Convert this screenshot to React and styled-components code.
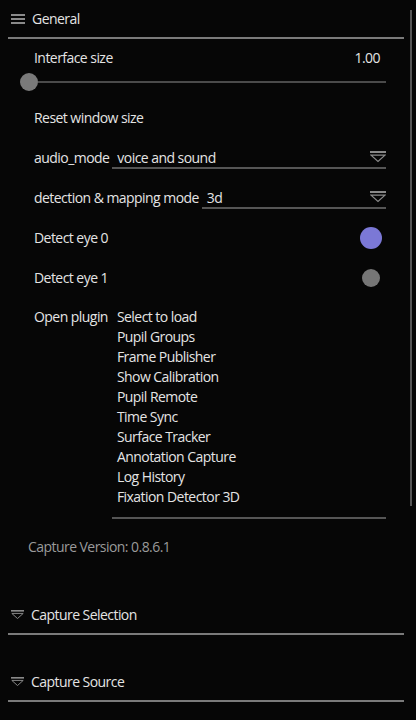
import React from 'react';
import styled, { createGlobalStyle } from 'styled-components';

const GlobalStyle = createGlobalStyle`
  html, body {
    margin: 0;
    padding: 0;
    background: #060606;
  }
  body {
    font-family: "Open Sans", "Noto Sans", sans-serif;
    font-size: 14px;
    letter-spacing: -0.55px;
    color: #e4e4e4;
  }
`;

const Screen = styled.div`
  width: 416px;
  height: 720px;
  background: #060606;
  display: flex;
  align-items: flex-start;
  overflow: hidden;
`;

const Panel = styled.div`
  flex: 1;
  display: flex;
  flex-direction: column;
  padding-left: 8px;
  margin-right: 6px;
`;

const ScrollTrack = styled.div`
  width: 2px;
  height: 496px;
  margin-top: 10px;
  margin-right: 4px;
  background: #555;
`;

const SectionHeader = styled.div`
  flex: none;
  height: 37px;
  display: flex;
  align-items: center;
  gap: 7px;
  padding-left: 3px;
  border-bottom: 2px solid #7a7a7a;
  margin-top: ${p => p.$top || 0}px;
`;

const Text = styled.span`
  line-height: 20px;
  padding-top: 1px;
  color: ${p => p.$color || '#e4e4e4'};
`;

const Body = styled.div`
  flex: none;
  display: flex;
  flex-direction: column;
  padding: 8px 18px 0 26px;
`;

const Row = styled.div`
  flex: none;
  height: ${p => p.$h || 40}px;
  display: flex;
  align-items: center;
  justify-content: space-between;
`;

const SliderRow = styled.div`
  flex: none;
  height: 20px;
  margin: 5px 0 5px -14px;
  display: flex;
  align-items: center;
`;

const Knob = styled.div`
  width: 18px;
  height: 18px;
  border-radius: 50%;
  background: #7a7a7a;
  flex: none;
`;

const SliderTrack = styled.div`
  flex: 1;
  height: 2px;
  background: #4a4a4a;
`;

const SelectRow = styled.div`
  flex: none;
  height: 40px;
  display: flex;
  align-items: center;
  gap: 3px;
`;

const SelectBox = styled.div`
  flex: 1;
  height: 20px;
  margin-top: 2px;
  display: flex;
  align-items: center;
  justify-content: space-between;
  padding-left: 5px;
  border-bottom: 2px solid #555;
`;

const Toggle = styled.div`
  width: ${p => (p.$on ? 22 : 18)}px;
  height: ${p => (p.$on ? 22 : 18)}px;
  border-radius: 50%;
  background: ${p => (p.$on ? '#7b78d6' : '#767676')};
  margin-right: ${p => (p.$on ? 4 : 6)}px;
  margin-top: 2px;
`;

const PluginRow = styled.div`
  flex: none;
  display: flex;
  gap: 9px;
  padding-top: 10px;
  line-height: 20px;
`;

const PluginList = styled.div`
  flex: 1;
  display: flex;
  flex-direction: column;
  padding: 0 0 10px 5px;
  margin-left: -5px;
  border-bottom: 2px solid #555;
`;

const Version = styled.div`
  flex: none;
  margin: 18px 0 0 -6px;
  line-height: 20px;
  color: #9a9a9a;
`;

const Hamburger = () => (
  <svg width="14" height="10" viewBox="0 0 14 10" style={{ flex: 'none' }}>
    <rect x="0" y="0" width="14" height="2" fill="#8a8a8a" />
    <rect x="0" y="4" width="14" height="2" fill="#8a8a8a" />
    <rect x="0" y="8" width="14" height="2" fill="#8a8a8a" />
  </svg>
);

const DropIcon = ({ w = 16, color = '#8a8a8a' }) => (
  <svg width={w} height={w * 0.72} viewBox="0 0 16 11.5" style={{ flex: 'none' }}>
    <rect x="0" y="0" width="16" height="2" fill={color} />
    <path d="M1 4.2 H15 L8 10.5 Z" fill="none" stroke={color} strokeWidth="1.2" strokeLinejoin="miter" />
  </svg>
);

const plugins = [
  'Select to load',
  'Pupil Groups',
  'Frame Publisher',
  'Show Calibration',
  'Pupil Remote',
  'Time Sync',
  'Surface Tracker',
  'Annotation Capture',
  'Log History',
  'Fixation Detector 3D',
];

export default function App() {
  return (
    <>
      <GlobalStyle />
      <Screen>
        <Panel>
          <SectionHeader>
            <Hamburger />
            <Text>General</Text>
          </SectionHeader>
          <Body>
            <Row $h={20}>
              <Text>Interface size</Text>
              <Text style={{ marginRight: 6 }}>1.00</Text>
            </Row>
            <SliderRow>
              <Knob />
              <SliderTrack />
            </SliderRow>
            <Row>
              <Text>Reset window size</Text>
            </Row>
            <SelectRow>
              <Text>audio_mode</Text>
              <SelectBox>
                <Text>voice and sound</Text>
                <DropIcon />
              </SelectBox>
            </SelectRow>
            <SelectRow>
              <Text>detection &amp; mapping mode</Text>
              <SelectBox>
                <Text>3d</Text>
                <DropIcon />
              </SelectBox>
            </SelectRow>
            <Row>
              <Text>Detect eye 0</Text>
              <Toggle $on />
            </Row>
            <Row>
              <Text>Detect eye 1</Text>
              <Toggle />
            </Row>
            <PluginRow>
              <span>Open plugin</span>
              <PluginList>
                {plugins.map(p => (
                  <span key={p}>{p}</span>
                ))}
              </PluginList>
            </PluginRow>
            <Version>Capture Version: 0.8.6.1</Version>
          </Body>
          <SectionHeader $top={39}>
            <DropIcon w={13} />
            <Text>Capture Selection</Text>
          </SectionHeader>
          <SectionHeader $top={28}>
            <DropIcon w={13} />
            <Text>Capture Source</Text>
          </SectionHeader>
        </Panel>
        <ScrollTrack />
      </Screen>
    </>
  );
}
